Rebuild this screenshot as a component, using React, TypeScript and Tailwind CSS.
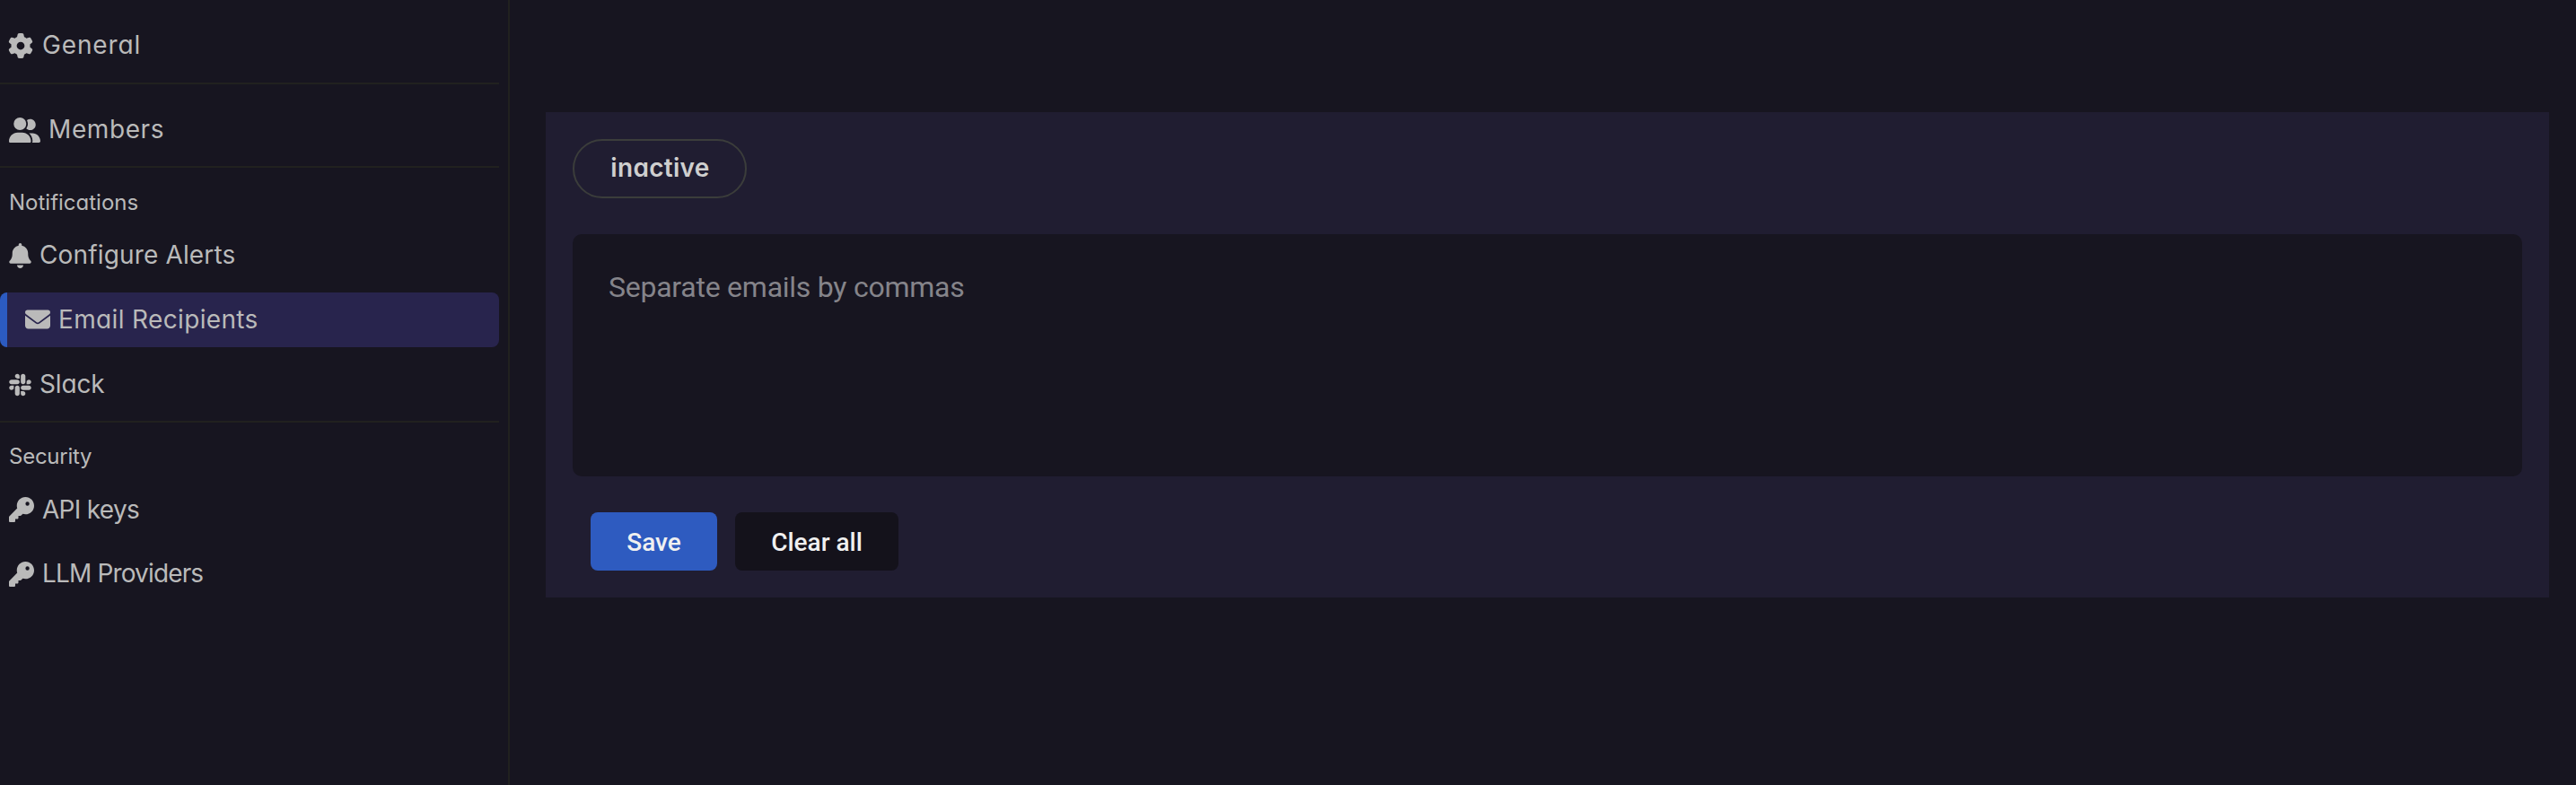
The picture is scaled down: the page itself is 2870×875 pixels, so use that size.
import { type ReactNode } from "react";
import { FaBell, FaEnvelope, FaGear, FaKey, FaSlack, FaUserGroup } from "react-icons/fa6";

function NavItem({ icon, label, tracking }: { icon: ReactNode; label: string; tracking: string }) {
  return (
    <a className="flex h-[61px] w-full shrink-0 items-center gap-[9px] pl-[10px] text-[28px] leading-[42px]">
      {icon}
      <span className={tracking}>{label}</span>
    </a>
  );
}

function Sidebar() {
  return (
    <aside className="flex h-full w-[568px] shrink-0 flex-col border-r-2 border-[#21211f] pr-[10px] font-[Inter,sans-serif] text-[#bababa] [font-feature-settings:'cv11']">
      <div className="h-[94px] border-b-2 border-[#21211f] pt-5">
        <NavItem icon={<FaGear className="mr-px -ml-px" />} label="General" tracking="pb-[2px] tracking-[0.85px]" />
      </div>
      <div className="h-[93px] border-b-2 border-[#21211f] pt-[20.5px]">
        <NavItem icon={<FaUserGroup className="w-[35px]" />} label="Members" tracking="pb-[2px] tracking-[0.6px]" />
      </div>
      <nav className="flex h-[284px] flex-col border-b-2 border-[#21211f] pt-5">
        <h2 className="h-[47px] pl-[10px] text-[24px] leading-[38px]">Notifications</h2>
        <NavItem icon={<FaBell className="w-[25px]" />} label="Configure Alerts" tracking="pb-[2px] tracking-[0.15px]" />
        <a className="my-[11px] flex h-[61px] shrink-0 items-center gap-[9px] rounded-[8px] border-l-8 border-[#2c5bc1] bg-[#28244d] pl-5 text-[28px] leading-[42px]">
          <FaEnvelope className="mb-[2px]" />
          <span className="pb-[2px] tracking-[0.35px]">Email Recipients</span>
        </a>
        <NavItem icon={<FaSlack className="w-[25px]" />} label="Slack" tracking="pb-[2px] tracking-[-0.15px]" />
      </nav>
      <nav className="flex flex-col pt-[19px]">
        <h2 className="h-[47.5px] pl-[10px] text-[24px] leading-[38px] tracking-[-0.25px]">Security</h2>
        <NavItem icon={<FaKey />} label="API keys" tracking="tracking-[-0.7px]" />
        <div className="h-[11px]" />
        <NavItem icon={<FaKey />} label="LLM Providers" tracking="pb-[2px] tracking-[-0.85px]" />
      </nav>
    </aside>
  );
}

export default function App() {
  return (
    <div className="flex h-[875px] w-full bg-[#171520]">
      <Sidebar />
      <main className="min-w-0 flex-1 pr-[30px] pl-10 pt-[125px]">
        <section className="flex h-[541px] flex-col items-start bg-[#201d31] p-[30px]">
          <div className="flex h-[66px] w-[194px] items-center justify-center rounded-full border-2 border-[#3b3d3b] font-[Inter,sans-serif] text-[28px] leading-[42px] font-semibold text-[#cfcfcf] [font-feature-settings:'cv11']">
            <span className="pb-[2px] pl-px tracking-[0.3px]">inactive</span>
          </div>
          <textarea
            placeholder="Separate emails by commas"
            className="mt-10 block h-[270px] w-full resize-none rounded-[10px] bg-[#171520] px-10 py-[37px] font-[Roboto,sans-serif] text-[32px] leading-[44px] tracking-[-0.25px] text-[#e5e5e5] outline-none placeholder:text-[#85848a]"
          />
          <div className="mt-10 flex gap-5 pl-5 font-[Roboto,sans-serif] text-[28px] font-medium text-[#f0f0f0]">
            <button className="h-[65px] w-[141px] rounded-[8px] bg-[#2e5bc0] pt-[2px]">Save</button>
            <button className="h-[65px] w-[182px] rounded-[8px] bg-[#14121b] pt-[2px]">Clear all</button>
          </div>
        </section>
      </main>
    </div>
  );
}
